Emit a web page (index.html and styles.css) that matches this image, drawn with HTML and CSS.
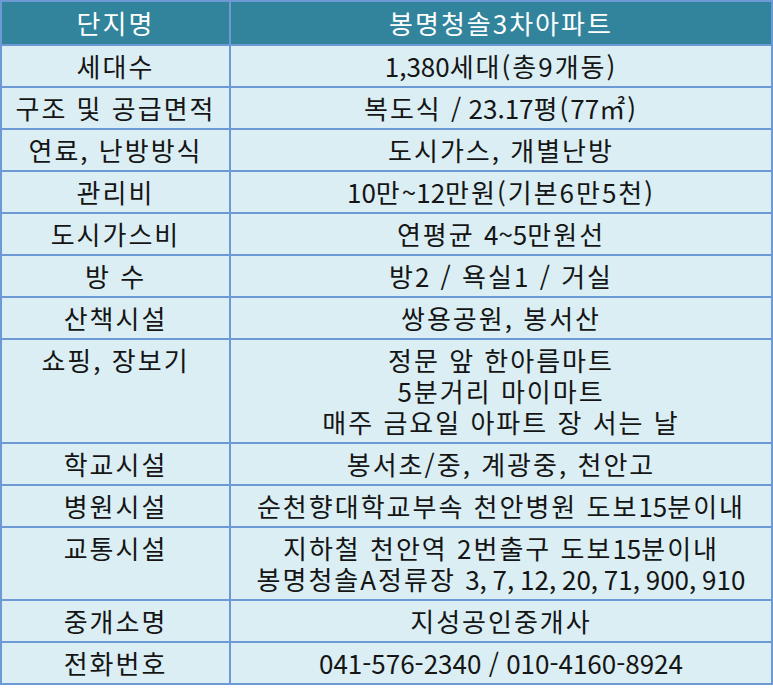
FILE: index.html
```html
<!DOCTYPE html>
<html lang="ko">
<head>
<meta charset="utf-8">
<title>봉명청솔3차아파트</title>
<link rel="stylesheet" href="styles.css">
</head>
<body>
<table class="info">
  <colgroup><col class="c1"><col class="c2"></colgroup>
  <thead>
    <tr><th>단지명</th><th>봉명청솔3차아파트</th></tr>
  </thead>
  <tbody>
    <tr><td>세대수</td><td><span class="num">1,380</span>세대(총9개동)</td></tr>
    <tr><td>구조 및 공급면적</td><td>복도식 <span class="num">/ 23.17</span>평(<span class="num">77</span>㎡)</td></tr>
    <tr><td>연료, 난방방식</td><td>도시가스, 개별난방</td></tr>
    <tr><td>관리비</td><td><span class="num">10</span>만<span class="num">~12</span>만원(기본6만5천)</td></tr>
    <tr><td>도시가스비</td><td>연평균 <span class="num">4~5</span>만원선</td></tr>
    <tr><td>방 수</td><td>방2 / 욕실1 / 거실</td></tr>
    <tr><td>산책시설</td><td>쌍용공원, 봉서산</td></tr>
    <tr><td>쇼핑, 장보기</td><td>정문 앞 한아름마트<br>5분거리 마이마트<br>매주 금요일 아파트 장 서는 날</td></tr>
    <tr><td>학교시설</td><td>봉서초/중, 계광중, 천안고</td></tr>
    <tr><td>병원시설</td><td>순천향대학교부속 천안병원 도보<span class="num">15</span>분이내</td></tr>
    <tr><td>교통시설</td><td>지하철 천안역 2번출구 도보<span class="num">15</span>분이내<br>봉명청솔A정류장 <span class="num tight">3, 7, 12, 20, 71, 900, 910</span></td></tr>
    <tr><td>중개소명</td><td>지성공인중개사</td></tr>
    <tr><td>전화번호</td><td><span class="num">041-576-2340 / 010-4160-8924</span></td></tr>
  </tbody>
</table>
</body>
</html>
```
FILE: styles.css
```css
html, body {
  margin: 0;
  padding: 0;
  background: #ffffff;
}
.info {
  border-collapse: collapse;
  width: 773px;
  font-family: "Noto Sans CJK KR", "Noto Sans", sans-serif;
  font-size: 26px;
  letter-spacing: 2px;
  color: #151515;
}
.info .c1 { width: 229px; }
.info th,
.info td {
  border: 2px solid #6d9ad4;
  text-align: center;
  vertical-align: top;
  line-height: 31px;
  padding: 4px 2px 5px;
  font-weight: 400;
  white-space: nowrap;
}
.info th {
  background: #31849b;
  color: #ffffff;
  padding: 5px 2px 6px;
}
.info td {
  background: #daeef3;
}
.info .num {
  letter-spacing: 0;
}
.info .tight {
  word-spacing: -1.5px;
}
```
